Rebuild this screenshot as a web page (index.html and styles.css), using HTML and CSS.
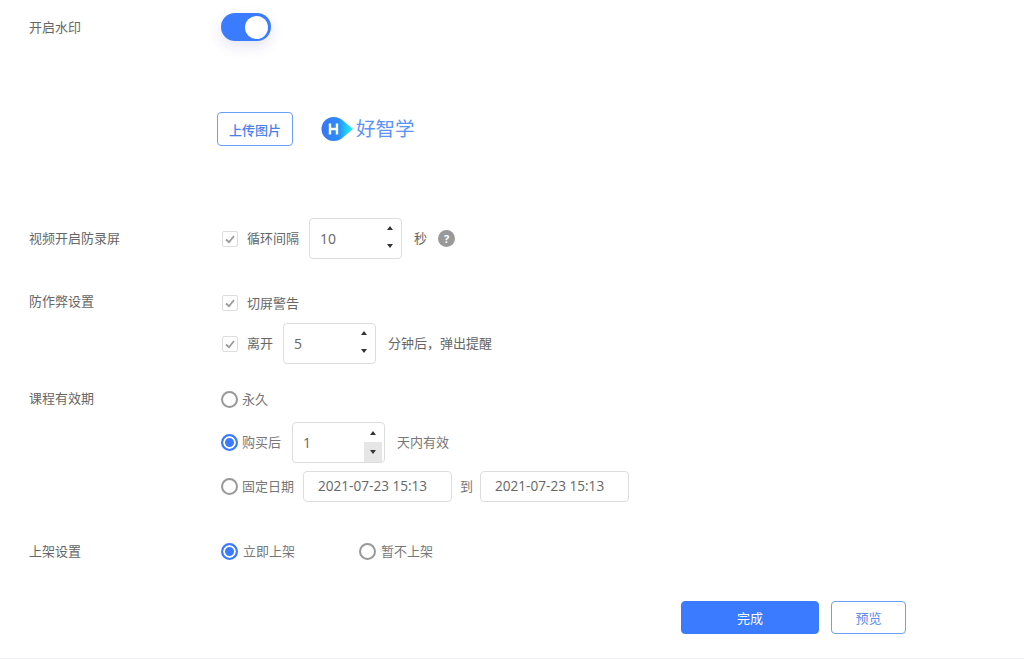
FILE: index.html
```html
<!DOCTYPE html>
<html lang="zh-CN">
<head>
<meta charset="utf-8">
<title>课程设置</title>
<link rel="stylesheet" href="styles.css">
</head>
<body>
<main class="page">
  <section class="row row-switch">
    <div class="label">开启水印</div>
    <div class="switch"><span class="knob"></span></div>
  </section>

  <section class="row row-upload">
    <div class="label"></div>
    <div class="upload">
      <button class="btn-upload">上传图片</button>
      <div class="logo">
        <svg class="logo-mark" width="33" height="26" viewBox="0 0 33 26">
          <defs>
            <linearGradient id="lg" x1="0" x2="1" y1="0" y2="0">
              <stop offset="0" stop-color="#3a74f4"/>
              <stop offset=".55" stop-color="#2b8ef8"/>
              <stop offset=".8" stop-color="#22cdf6"/>
              <stop offset="1" stop-color="#1ff0f4"/>
            </linearGradient>
          </defs>
          <path d="M12.5 1C17 1 20 2.5 23 5.5L32 13L23 20.5C20 23.5 17 25 12.5 25A12 12 0 0 1 12.5 1Z" fill="url(#lg)"/>
          <path d="M9 7.5V18.5M16 7.5V18.5M9 13H16" stroke="#fff" stroke-width="2.4" fill="none"/>
        </svg>
        <span class="logo-text">好智学</span>
      </div>
    </div>
  </section>

  <section class="row row-video">
    <div class="label">视频开启防录屏</div>
    <div class="line">
      <span class="check"><svg width="14" height="14" viewBox="0 0 14 14"><path d="M3 7.5L6 10.2L11 4" stroke="#999" stroke-width="1.8" fill="none"/></svg></span>
      <span class="text raised">循环间隔</span>
      <div class="stepper gap-l">
        <span class="value">10</span>
        <span class="spin"><span class="cell"><i class="up"></i></span><span class="cell cell-down"><i class="down"></i></span></span>
      </div>
      <span class="text raised gap-unit">秒</span>
      <span class="help">?</span>
    </div>
  </section>

  <section class="row row-cheat">
    <div class="label">防作弊设置</div>
    <div class="stack">
      <div class="line line-short">
        <span class="check"><svg width="14" height="14" viewBox="0 0 14 14"><path d="M3 7.5L6 10.2L11 4" stroke="#999" stroke-width="1.8" fill="none"/></svg></span>
        <span class="text">切屏警告</span>
      </div>
      <div class="line line-leave">
        <span class="check"><svg width="14" height="14" viewBox="0 0 14 14"><path d="M3 7.5L6 10.2L11 4" stroke="#999" stroke-width="1.8" fill="none"/></svg></span>
        <span class="text raised">离开</span>
        <div class="stepper gap-l">
          <span class="value">5</span>
          <span class="spin"><span class="cell"><i class="up"></i></span><span class="cell cell-down"><i class="down"></i></span></span>
        </div>
        <span class="text raised gap-unit">分钟后，弹出提醒</span>
      </div>
    </div>
  </section>

  <section class="row row-period">
    <div class="label">课程有效期</div>
    <div class="stack">
      <div class="line line-short">
        <span class="radio"></span>
        <span class="text muted">永久</span>
      </div>
      <div class="line line-buy">
        <span class="radio on"></span>
        <span class="text muted raised">购买后</span>
        <div class="stepper gap-m">
          <span class="value">1</span>
          <span class="spin"><span class="cell"><i class="up"></i></span><span class="cell cell-down active"><i class="down"></i></span></span>
        </div>
        <span class="text muted raised gap-unit">天内有效</span>
      </div>
      <div class="line line-date">
        <span class="radio"></span>
        <span class="text muted raised">固定日期</span>
        <div class="date gap-s">2021-07-23 15:13</div>
        <span class="text muted raised to">到</span>
        <div class="date">2021-07-23 15:13</div>
      </div>
    </div>
  </section>

  <section class="row row-publish">
    <div class="label">上架设置</div>
    <div class="line line-short">
      <span class="option"><span class="radio on"></span><span class="text muted">立即上架</span></span>
      <span class="option"><span class="radio"></span><span class="text muted">暂不上架</span></span>
    </div>
  </section>

  <footer class="actions">
    <button class="btn btn-primary">完成</button>
    <button class="btn btn-ghost">预览</button>
  </footer>
</main>
</body>
</html>
```
FILE: styles.css
```css
* { box-sizing: border-box; }
html, body { margin: 0; padding: 0; background: #fff; }
body {
  font-family: "Noto Sans CJK SC", "Noto Sans", sans-serif;
  font-size: 13px;
  color: #666;
  overflow: hidden;
}
.page {
  height: 659px;
  padding-left: 29px;
  border-bottom: 1px solid #eeeef2;
  overflow: hidden;
}
.row { display: flex; }
.label { width: 192px; flex: none; line-height: 20px; color: #666; }
.row-switch { margin-top: 13px; height: 28px; align-items: center; }
.row-switch .label { line-height: 28px; }
.switch {
  width: 50px; height: 28px; border-radius: 14px;
  background: #3a7bff;
  box-shadow: 0 5px 14px rgba(60, 60, 170, .14);
  display: flex; justify-content: flex-end; align-items: center;
  padding-right: 3px;
}
.knob { width: 23px; height: 23px; border-radius: 50%; background: #fff; }
.row-upload { margin-top: 71px; height: 34px; }
.upload { display: flex; align-items: center; margin-left: -4px; }
.btn-upload {
  width: 76px; height: 34px; border: 1px solid #6a9ffb; border-radius: 4px;
  background: #fff; color: #4a80ee; font: 500 13px "Noto Sans CJK SC", sans-serif; padding: 0;
}
.logo { display: flex; align-items: center; margin-left: 28px; }
.logo-mark { flex: none; }
.logo-text { color: #5b93f5; font-size: 19.5px; line-height: 24px; margin-left: 2px; padding-bottom: 2px; }
.row-video { margin-top: 72px; height: 41px; align-items: center; }
.row-video .label { padding-bottom: 2px; }
.line { display: flex; align-items: center; margin-left: 1px; }
.stack { display: flex; flex-direction: column; }
.check {
  width: 16px; height: 16px; flex: none; border: 1px solid #ddd; border-radius: 2px;
  background: #fff; display: flex; align-items: center; justify-content: center;
  margin-right: 9px;
}
.text { line-height: 20px; white-space: nowrap; color: #666; }
.raised { padding-bottom: 2px; }
.muted { color: #777; }
.stepper {
  width: 93px; height: 41px; border: 1px solid #ddd; border-radius: 4px;
  display: flex; align-items: center; background: #fff; overflow: hidden; flex: none;
}
.gap-l { margin-left: 10px; }
.gap-m { margin-left: 11px; }
.gap-s { margin-left: 9px; }
.gap-unit { margin-left: 12px; }
.value { flex: 1; padding-left: 10px; font: 14px "Open Sans", sans-serif; color: #666; }
.spin { width: 18px; align-self: stretch; margin-right: 2px; display: flex; flex-direction: column; }
.cell { flex: 1; display: flex; align-items: center; justify-content: center; }
.cell-down { padding-bottom: 3px; }
.cell.active { background: #e6e6e6; padding-bottom: 1px; }
.up { width: 0; height: 0; border: 3.5px solid transparent; border-top: 0; border-bottom: 4px solid #333; }
.down { width: 0; height: 0; border: 3.5px solid transparent; border-bottom: 0; border-top: 4px solid #333; }
.help {
  width: 17px; height: 17px; border-radius: 50%; background: #999; color: #fff;
  font: bold 11px/17px "Open Sans", sans-serif; text-align: center; margin-left: 11px;
}
.row-cheat { margin-top: 32px; }
.row-cheat .label { padding-top: 0; }
.line-short { height: 24px; }
.line-leave { margin-top: 8px; }
.row-period { margin-top: 23px; }
.row-period .label { padding-top: 1px; }
.line-buy { margin-top: 11px; height: 41px; }
.line-date { margin-top: 8px; height: 31px; }
.radio {
  width: 17px; height: 17px; flex: none; border: 2px solid #999; border-radius: 50%;
  background: #fff; margin-right: 4px; margin-left: -1px;
}
.radio.on { border-color: #3a7bff; background: #3a7bff; box-shadow: inset 0 0 0 2px #fff; }
.date {
  width: 149px; height: 31px; border: 1px solid #ddd; border-radius: 4px; padding-left: 14px;
  font: 13.6px/27px "Open Sans", sans-serif; color: #666; flex: none;
}
.to { margin: 0 7px 0 8px; }
.row-publish { margin-top: 37px; }
.row-publish .label { padding-top: 2px; }
.option { display: flex; align-items: center; width: 138px; }
.option .radio { margin-right: 5px; }
.actions {
  margin-top: 38px; display: flex; justify-content: flex-end; gap: 12px; padding-right: 118px;
}
.btn { height: 33px; border-radius: 4px; font: 13px "Noto Sans CJK SC", sans-serif; padding: 0; }
.btn-primary { width: 138px; background: #3a7bff; border: 1px solid #3a7bff; color: #fff; }
.btn-ghost { width: 75px; background: #fff; border: 1px solid #6a9ffb; color: #5a8cf0; }
```
